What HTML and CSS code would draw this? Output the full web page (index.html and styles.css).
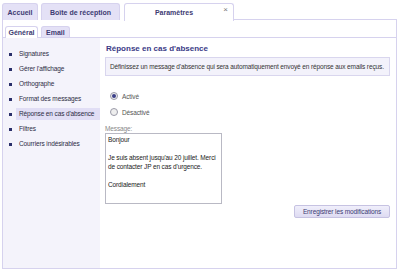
FILE: index.html
```html
<!DOCTYPE html>
<html lang="fr">

<head>
    <meta charset="UTF-8">
    <title>Paramètres</title>
    <link rel="stylesheet" href="styles.css">
</head>

<body>
    <div class="window">
        <div class="tabs">
            <div class="tab tab-home">Accueil</div>
            <div class="tab tab-inbox">Boîte de réception</div>
            <div class="tab tab-active">Paramètres<span class="close">×</span></div>
            <div class="tab-fill"></div>
        </div>

        <div class="panel">
            <div class="subtabs">
                <div class="subtab subtab-active">Général</div>
                <div class="subtab">Email</div>
            </div>

            <div class="body">
                <ul class="menu">
                    <li>Signatures</li>
                    <li>Gérer l'affichage</li>
                    <li>Orthographe</li>
                    <li>Format des messages</li>
                    <li class="selected">Réponse en cas d'absence</li>
                    <li>Filtres</li>
                    <li>Courriers indésirables</li>
                </ul>

                <div class="content">
                    <h2>Réponse en cas d'absence</h2>
                    <div class="info">Définissez un message d'absence qui sera automatiquement envoyé en réponse aux emails reçus.</div>

                    <div class="radios">
                        <label class="radio"><span class="dot on"></span>Activé</label>
                        <label class="radio"><span class="dot"></span>Désactivé</label>
                    </div>

                    <div class="field">
                        <div class="field-label">Message:</div>
                        <div class="textarea">Bonjour<br><br>Je suis absent jusqu'au 20 juillet. Merci de contacter JP en cas d'urgence.<br><br>Cordialement</div>
                    </div>

                    <div class="actions">
                        <button class="btn">Enregistrer les modifications</button>
                    </div>
                </div>
            </div>
        </div>
    </div>
</body>

</html>
```

FILE: styles.css
```css
body {
    margin: 0;
    background: #fff;
    font-family: "Liberation Sans", Arial, sans-serif;
    font-size: 6.5px;
    letter-spacing: -0.12px;
    color: #222;
}

.window {
    padding: 3px 3px 0 2px;
    width: 395px;
}

.tabs {
    display: flex;
    align-items: flex-end;
    height: 17px;
}

.tab {
    height: 17px;
    box-sizing: border-box;
    border: 1px solid #d6d2ee;
    border-bottom: none;
    border-radius: 3px 3px 0 0;
    background: #e4e1f6;
    color: #3d3b72;
    font-weight: bold;
    font-size: 7px;
    letter-spacing: 0;
    display: flex;
    align-items: center;
    justify-content: center;
    margin-right: 3px;
    position: relative;
}

.tab-home {
    width: 36px;
}

.tab-inbox {
    width: 79px;
    margin-right: 4px;
}

.tab-active {
    width: 110px;
    height: 18px;
    background: #fff;
    margin-bottom: -1px;
    margin-right: 0;
    padding-right: 10px;
    z-index: 1;
}

.close {
    position: absolute;
    right: 5px;
    top: 1px;
    color: #777;
    font-size: 8px;
    font-weight: normal;
}

.tab-fill {
    flex: 1;
    border-bottom: 1px solid #d6d2ee;
    align-self: stretch;
}

.panel {
    border: 1px solid #d6d2ee;
    border-top: none;
    height: 248px;
    display: flex;
    flex-direction: column;
}

.subtabs {
    display: flex;
    align-items: flex-end;
    padding: 6px 0 0 2px;
    border-bottom: 1px solid #d6d2ee;
}

.subtab {
    height: 11px;
    box-sizing: border-box;
    padding: 0 4px;
    border: 1px solid #d6d2ee;
    border-bottom: none;
    border-radius: 3px 3px 0 0;
    background: #e4e1f6;
    color: #3d3b72;
    font-weight: bold;
    font-size: 7px;
    letter-spacing: 0;
    display: flex;
    align-items: center;
    margin-right: 3px;
}

.subtab-active {
    background: #fff;
    height: 12px;
    margin-bottom: -1px;
    width: 33px;
    justify-content: center;
}

.body {
    flex: 1;
    display: flex;
}

.menu {
    width: 97px;
    background: #f4f3fb;
    margin: 0;
    padding: 10px 0 0 0;
    list-style: none;
}

.menu li {
    position: relative;
    height: 12px;
    line-height: 12px;
    margin: 0 0 3px 13px;
    padding-left: 3px;
    color: #2c2c44;
    white-space: nowrap;
}

.menu li::before {
    content: "";
    position: absolute;
    left: -7px;
    top: 5px;
    width: 3px;
    height: 3px;
    background: #2a2f6a;
}

.menu li.selected {
    background: #e1def5;
}

.content {
    flex: 1;
    padding: 6px 6px 0 5px;
}

h2 {
    margin: 0 0 4px 1px;
    font-size: 8px;
    letter-spacing: 0;
    color: #3a3a86;
}

.info {
    background: #f3f2fb;
    border: 1px solid #d9d6ee;
    height: 19px;
    box-sizing: border-box;
    padding: 0 4px;
    display: flex;
    align-items: center;
    color: #333;
    white-space: nowrap;
}

.radios {
    padding: 12px 0 0 5px;
}

.radio {
    display: flex;
    align-items: center;
    height: 16px;
    color: #555;
}

.dot {
    width: 6px;
    height: 6px;
    border-radius: 50%;
    border: 1px solid #9a9aa8;
    background: #eee;
    margin-right: 4px;
    position: relative;
}

.dot.on::after {
    content: "";
    position: absolute;
    left: 1px;
    top: 1px;
    width: 4px;
    height: 4px;
    border-radius: 50%;
    background: #3b3f88;
}

.field {
    margin-top: 5px;
}

.field-label {
    color: #888;
    line-height: 8px;
}

.textarea {
    width: 117px;
    height: 71px;
    box-sizing: border-box;
    border: 1px solid #b9b9c4;
    padding: 1px 2px;
    line-height: 9px;
    color: #222;
}

.actions {
    display: flex;
    justify-content: flex-end;
    margin-top: 1px;
}

.btn {
    font-family: inherit;
    font-size: 6.5px;
    letter-spacing: -0.12px;
    color: #3a3a72;
    background: linear-gradient(#f0effb, #dedbf2);
    border: 1px solid #c6c2e2;
    border-radius: 2px;
    width: 96px;
    height: 13px;
    padding: 0;
}
```
